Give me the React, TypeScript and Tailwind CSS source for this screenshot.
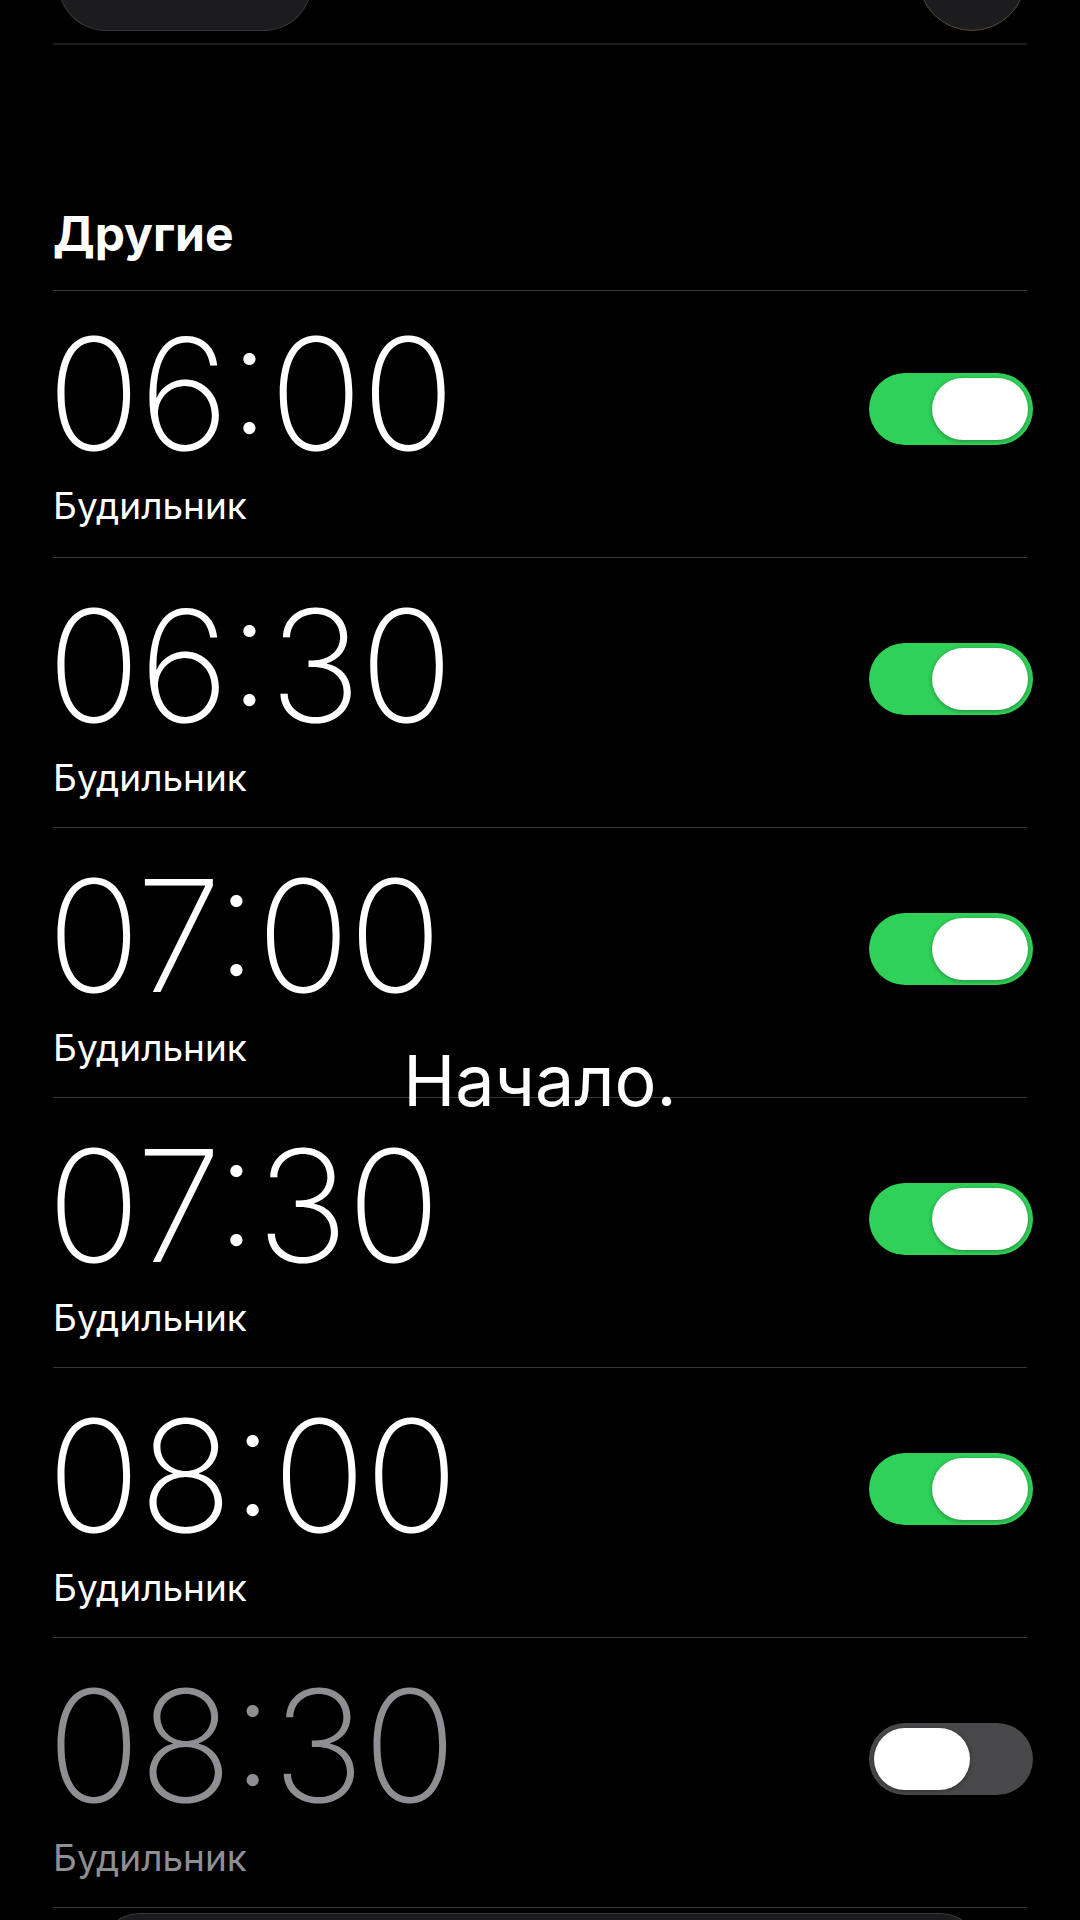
import React from 'react';

type Alarm = { time: string; label: string; on: boolean };

const alarms: Alarm[] = [
  { time: '06:00', label: 'Будильник', on: true },
  { time: '06:30', label: 'Будильник', on: true },
  { time: '07:00', label: 'Будильник', on: true },
  { time: '07:30', label: 'Будильник', on: true },
  { time: '08:00', label: 'Будильник', on: true },
  { time: '08:30', label: 'Будильник', on: false },
];

const Toggle = ({ on }: { on: boolean }) => (
  <div
    className={`flex h-[72px] w-[164px] items-center rounded-full px-[5px] ${
      on ? 'justify-end bg-[#30d158]' : 'justify-start bg-[#48484a]'
    }`}
  >
    <div className="h-[62px] w-[96px] rounded-full bg-white shadow-[0_1px_4px_rgba(0,0,0,0.35)]" />
  </div>
);

const AlarmRow = ({ alarm, first }: { alarm: Alarm; first: boolean }) => (
  <div
    className={`flex items-start justify-between border-b border-[#38383a] ${
      first ? 'h-[267px]' : 'h-[270px]'
    }`}
  >
    <div className={`ml-[-6px] flex flex-col ${first ? 'pt-[25px]' : 'pt-[30px]'}`}>
      <span
        className={`font-['Inter',sans-serif] text-[155px] font-extralight leading-none tracking-[-1.5px] [font-feature-settings:'case'] ${
          alarm.on ? 'text-white' : 'text-[#8e8e93]'
        }`}
      >
        {alarm.time}
      </span>
      <span
        className={`ml-[6px] mt-[16px] font-['Inter',sans-serif] text-[37px] leading-none ${
          alarm.on ? 'text-white' : 'text-[#8e8e93]'
        }`}
      >
        {alarm.label}
      </span>
    </div>
    <div className={`mr-[-6px] ${first ? 'pt-[82px]' : 'pt-[85px]'}`}>
      <Toggle on={alarm.on} />
    </div>
  </div>
);

export default function App() {
  return (
    <div className="relative h-[1920px] w-[1080px] overflow-hidden bg-black font-['Inter',sans-serif]">
      <div className="px-[53px]">
        {/* cut-off controls from the section above */}
        <div className="flex h-[31px] items-end justify-between pl-[5px] pr-[1px]">
          <div className="h-[60px] w-[254px] rounded-b-[48px] border border-t-0 border-[#3a3a3c] bg-[#1c1c1e]" />
          <div className="relative h-[31px] w-[108px]">
            <div className="absolute bottom-0 left-0 h-[108px] w-[108px] rounded-full border border-[#5a4a36] bg-[#1c1c1e]" />
          </div>
        </div>
        <div className="mt-[12px] h-[2px] bg-[#1f1f21]" />

        <div className="flex h-[245px] items-end pb-[32px]">
          <h2 className="text-[48px] font-bold leading-none text-white">Другие</h2>
        </div>
        <div className="h-[1px] bg-[#38383a]" />

        {alarms.map((a, i) => (
          <AlarmRow key={a.time} alarm={a} first={i === 0} />
        ))}

        <div className="mx-[47px] mt-[5px] h-[40px] rounded-t-[40px] border border-b-0 border-[#3a3a3c] bg-[#1c1c1e]" />
      </div>

      <div className="absolute left-0 right-0 top-[1046px] text-center text-[70px] leading-none text-white">
        Начало.
      </div>
    </div>
  );
}
